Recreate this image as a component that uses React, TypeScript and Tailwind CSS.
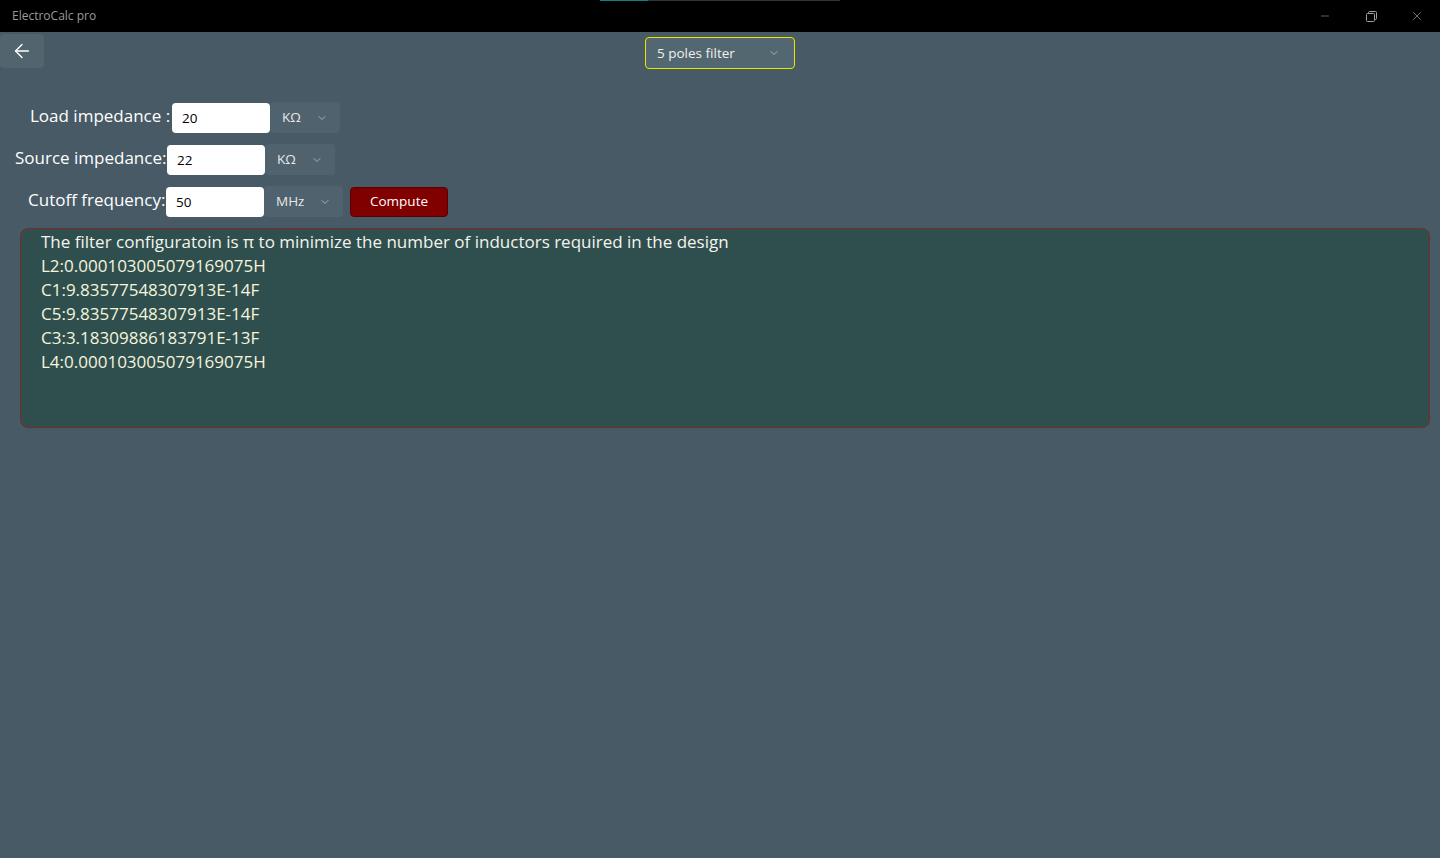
import React, { useState } from 'react';
import { ArrowLeft, ChevronDown, Minus, X } from 'lucide-react';

const font = { fontFamily: '"Segoe UI", "Open Sans", "Noto Sans", sans-serif' };

const results = [
  'L2:0.000103005079169075H',
  'C1:9.83577548307913E-14F',
  'C5:9.83577548307913E-14F',
  'C3:3.18309886183791E-13F',
  'L4:0.000103005079169075H',
];

function UnitCombo({ unit, width }: { unit: string; width: string }) {
  return (
    <div className={`flex items-center justify-between h-[31px] ${width} rounded bg-[#4f626d] pl-3 pr-3 text-[13.5px] text-[#e8e8e8]`}>
      <span>{unit}</span>
      <ChevronDown className="w-3 h-3 text-[#c8c8c8]" strokeWidth={1.5} />
    </div>
  );
}

function Field({ label, value, unit, labelW, labelPad, comboW, children }: {
  label: string; value: string; unit: string; labelW: string; labelPad: string; comboW: string; children?: React.ReactNode;
}) {
  const [v, setV] = useState(value);
  return (
    <div className="flex items-center">
      <div className={`${labelW} ${labelPad} shrink-0 text-[17px] text-white leading-none -mt-[5px] whitespace-nowrap`}>{label}</div>
      <input
        value={v}
        onChange={e => setV(e.target.value)}
        className="h-[30px] w-[98px] rounded bg-white px-[10px] text-[13.5px] text-black outline-none"
      />
      <UnitCombo unit={unit} width={comboW} />
      {children}
    </div>
  );
}

export default function App() {
  return (
    <div className="w-[1440px] h-[858px] flex flex-col bg-[#475a66] overflow-hidden" style={font}>
      {/* title bar */}
      <div className="h-[32px] bg-black flex items-center relative shrink-0">
        <div className="absolute top-0 left-[600px] h-[1px] w-[48px] bg-[#0f7f7f]" />
        <div className="absolute top-0 left-[648px] h-[1px] w-[192px] bg-[#333]" />
        <span className="pl-[12px] text-[12px] text-[#9a9a9a]">ElectroCalc pro</span>
        <div className="ml-auto flex items-center h-full">
          <div className="w-[46px] flex justify-center"><Minus className="w-[12px] h-[12px] text-[#a0a0a0]" strokeWidth={1.2} /></div>
          <div className="w-[46px] flex justify-center">
            <svg width="11" height="11" viewBox="0 0 11 11" fill="none" stroke="#a0a0a0" strokeWidth="1">
              <rect x="0.5" y="2.5" width="8" height="8" rx="1" />
              <path d="M2.5 2.5V1.5a1 1 0 0 1 1-1h6a1 1 0 0 1 1 1v6a1 1 0 0 1-1 1h-1" />
            </svg>
          </div>
          <div className="w-[46px] flex justify-center"><X className="w-[14px] h-[14px] text-[#a0a0a0]" strokeWidth={1.2} /></div>
        </div>
      </div>

      {/* header row */}
      <div className="relative h-[38px] mt-[2px] flex justify-center">
        <button className="absolute left-0 top-0 w-[44px] h-[34px] rounded bg-[#52656f] flex items-center justify-center">
          <ArrowLeft className="w-[22px] h-[22px] text-white" strokeWidth={1.5} />
        </button>
        <div className="mt-[3px] w-[150px] h-[32px] rounded border border-[#e6e600] bg-[#536770] flex items-center justify-between pl-[11px] pr-[14px] text-[13.5px] text-[#f0f0f0]">
          <span>5 poles filter</span>
          <ChevronDown className="w-3 h-3 text-[#c8c8c8]" strokeWidth={1.5} />
        </div>
      </div>

      {/* form */}
      <div className="flex flex-col gap-[11px] mt-[30px]">
        <Field label="Load impedance :" value="20" unit="KΩ" labelW="w-[172px]" labelPad="pl-[30px]" comboW="w-[70px]" />
        <Field label="Source impedance:" value="22" unit="KΩ" labelW="w-[167px]" labelPad="pl-[15px]" comboW="w-[70px]" />
        <Field label="Cutoff frequency:" value="50" unit="MHz" labelW="w-[166px]" labelPad="pl-[28px]" comboW="w-[79px]">
          <button className="ml-[7px] h-[30px] w-[98px] rounded bg-[#800000] border border-[#5a0000] text-[13.5px] text-white">
            Compute
          </button>
        </Field>
      </div>

      {/* output */}
      <div className="ml-[20px] mr-[10px] mt-[11px] h-[200px] rounded-[8px] border border-[#7a2a2a] bg-[#2f4f4f] pl-[20px] pt-[1px] text-[17px] leading-[24px] text-[#f5f5dc]">
        <div className="text-[#f4f4ec]">The filter configuratoin is π to minimize the number of inductors required in the design</div>
        {results.map(r => (
          <div key={r}>{r}</div>
        ))}
      </div>
    </div>
  );
}
